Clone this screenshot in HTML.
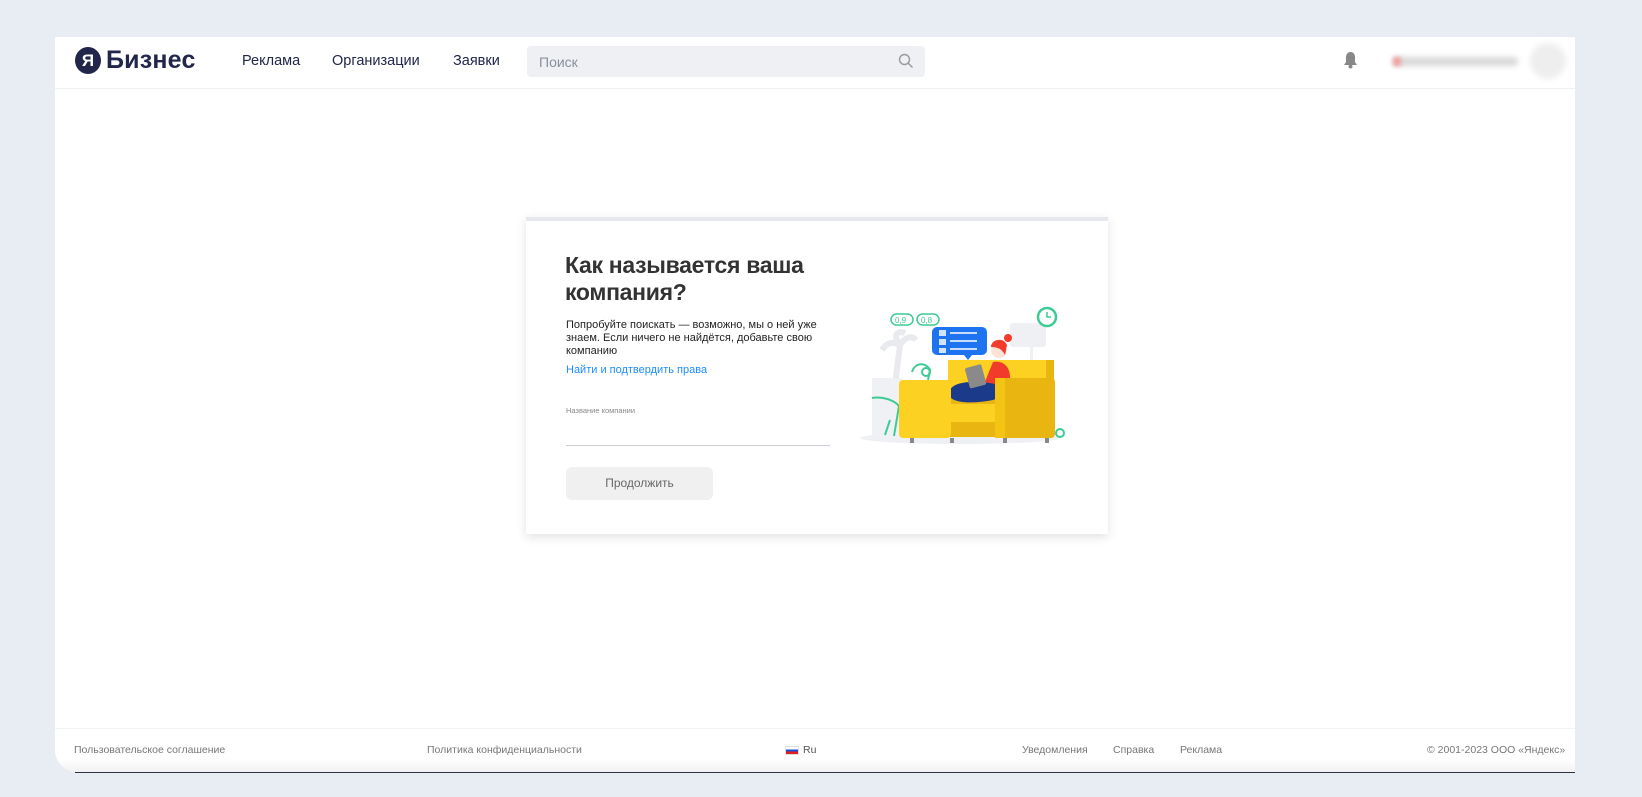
<!DOCTYPE html>
<html><head><meta charset="utf-8"><style>
*{margin:0;padding:0;box-sizing:border-box}
body{width:1642px;height:797px;background:#e8ecf3;position:relative;overflow:hidden;font-family:"Liberation Sans","Noto Sans CJK SC",sans-serif}
.a{position:absolute}
#panel{left:55px;top:37px;width:1520px;height:735px;background:#fff;border-radius:0 0 0 22px;overflow:hidden}
#strip{left:75px;top:770px;width:1500px;height:3px;background:#2a3440}
.nav{font-size:14.5px;color:#21264a;top:53px;font-weight:500}
.ft{font-size:10.5px;color:#777;top:744px}
</style></head><body>
<div id="strip" class="a"></div>
<div id="panel" class="a">
 <div class="a" style="left:0;top:51px;width:1520px;height:1px;background:#f0f1f4"></div>
 <div class="a" style="left:0;top:691px;width:1520px;height:44px;background:linear-gradient(#fff,#fff 70%,#f2f2f2);border-top:1px solid #f2f3f5"></div>
</div>
<!-- logo -->
<div class="a" style="left:75px;top:47px;width:26px;height:27px;border-radius:50%;background:#21264a;color:#fff;font-size:17px;font-weight:bold;text-align:center;line-height:27px">Я</div>
<div class="a" style="left:106px;top:45px;font-size:25px;font-weight:bold;color:#21264a;letter-spacing:0.2px;line-height:30px">Бизнес</div>
<div class="a nav" style="left:242px">Реклама</div>
<div class="a nav" style="left:332px">Организации</div>
<div class="a nav" style="left:453px">Заявки</div>
<div class="a" style="left:527px;top:46px;width:398px;height:31px;background:#eef0f4;border-radius:4px"></div>
<div class="a" style="left:539px;top:54px;font-size:14px;color:#8a8f9c">Поиск</div>
<svg class="a" style="left:898px;top:53px" width="16" height="16" viewBox="0 0 16 16"><circle cx="6.5" cy="6.5" r="5" fill="none" stroke="#999" stroke-width="1.4"/><path d="M10 10l4.5 4.5" stroke="#999" stroke-width="1.4"/></svg>
<svg class="a" style="left:1343px;top:51px" width="15" height="18" viewBox="0 0 15 18"><path d="M7.5 1c-3 0-4.5 2.5-4.5 5v5L1 14h13l-2-3V6c0-2.5-1.5-5-4.5-5z" fill="#888"/><circle cx="7.5" cy="15.5" r="2" fill="#888"/></svg>
<div class="a" style="left:1393px;top:57px;width:125px;height:9px;background:#d8d8d8;filter:blur(3px);border-radius:4px"></div>
<div class="a" style="left:1393px;top:57px;width:8px;height:9px;background:#f2a0a0;filter:blur(2px)"></div>
<div class="a" style="left:1530px;top:43px;width:36px;height:36px;border-radius:50%;background:#eee;filter:blur(3px)"></div>

<!-- card -->
<div class="a" style="left:526px;top:217px;width:582px;height:317px;background:#fff;border-top:4px solid #e6e8ee;box-shadow:0 3px 10px rgba(0,0,0,.12)"></div>
<div class="a" style="left:565px;top:252px;font-size:23px;line-height:27px;font-weight:bold;color:#333;width:270px;letter-spacing:-0.3px">Как называется ваша компания?</div>
<div class="a" style="left:566px;top:319px;font-size:11px;line-height:12.8px;color:#222;width:260px">Попробуйте поискать — возможно, мы о ней уже знаем. Если ничего не найдётся, добавьте свою компанию</div>
<div class="a" style="left:566px;top:364px;font-size:11px;color:#1e8cff">Найти и подтвердить права</div>
<div class="a" style="left:566px;top:406px;font-size:7.5px;color:#888">Название компании</div>
<div class="a" style="left:566px;top:445px;width:264px;height:1px;background:#c9ced8"></div>
<div class="a" style="left:566px;top:467px;width:147px;height:33px;background:#f0f0f0;border-radius:6px;font-size:12px;color:#666;text-align:center;line-height:33px">Продолжить</div>

<!-- illustration -->
<svg class="a" style="left:850px;top:300px" width="220" height="150" viewBox="0 0 220 150">
<ellipse cx="110" cy="138" rx="100" ry="6" fill="#eef0f3"/>
<rect x="160" y="23" width="36" height="24" rx="3" fill="#eef0f3"/><rect x="180" y="45" width="3" height="45" fill="#eef0f3"/>
<path d="M45 85 l5-40 M50 45 c-10-5-15 0-18 5 M50 45 c5-8 12-10 16-5 M50 45 c-8-10-2-15 5-12" stroke="#e8eaee" stroke-width="6" fill="none"/>
<rect x="22" y="78" width="30" height="60" fill="#f0f1f4"/>
<path d="M22 98 c10-2 22 2 27 8 l-5 30 M40 120 l-5 15 M62 72 c3-10 14-10 18 -2 l-2 10" stroke="#3ccb94" stroke-width="2" fill="none"/>
<circle cx="76" cy="72" r="4" fill="none" stroke="#3ccb94" stroke-width="2"/>
<rect x="41" y="14" width="22" height="11" rx="5.5" fill="none" stroke="#3ccb94" stroke-width="1.5"/><text x="45" y="23" font-size="8" fill="#3ccb94" font-family="Liberation Sans">0,9</text>
<rect x="67" y="14" width="22" height="11" rx="5.5" fill="none" stroke="#3ccb94" stroke-width="1.5"/><text x="71" y="23" font-size="8" fill="#3ccb94" font-family="Liberation Sans">0,8</text>
<circle cx="197" cy="17" r="9" fill="#fff" stroke="#3ccb94" stroke-width="2.5"/><path d="M197 12v5h4" stroke="#3ccb94" stroke-width="1.5" fill="none"/>
<!-- sofa back -->
<path d="M98 60h98l6 8v22h-104z" fill="#fcd121"/>
<rect x="196" y="60" width="8" height="40" fill="#e9b510"/>
<!-- woman body -->
<path d="M143 62c10-2 17 5 17 15v12h-28z" fill="#f33b2c"/>
<circle cx="149" cy="50" r="8" fill="#fde3d5"/>
<path d="M141 47c0-8 13-10 16-2l-2 10c-3-6-7-8-14-8z" fill="#f33b2c"/>
<circle cx="158" cy="38" r="4" fill="#f33b2c"/>
<!-- seat base -->
<rect x="60" y="95" width="140" height="42" fill="#e9b510"/>
<rect x="63" y="104" width="100" height="18" rx="2" fill="#fcd121"/>
<path d="M100 104v18" stroke="#e0aa10"/>
<!-- legs -->
<path d="M100 90c5-10 30-9 45-6 6 2 6 14-2 16-15 3-35 4-42-2-3-2-3-5-1-8z" fill="#1c3a8a"/>
<rect x="117" y="66" width="17" height="21" rx="2" fill="#8a8a8a" transform="rotate(-15 125 76)"/>
<!-- arms -->
<rect x="49" y="80" width="52" height="58" rx="4" fill="#fcd121"/>
<rect x="145" y="78" width="60" height="60" rx="4" fill="#e9b510"/>
<rect x="145" y="78" width="10" height="60" fill="#f4c414"/>
<path d="M87 27h45a5 5 0 0 1 5 5v18a5 5 0 0 1-5 5h-10l-4 5-4-5h-27a5 5 0 0 1-5-5v-18a5 5 0 0 1 5-5z" fill="#1e74f0"/>
<rect x="89" y="30" width="7" height="6" fill="#fff" opacity=".8"/><rect x="89" y="39" width="7" height="6" fill="#fff" opacity=".8"/><rect x="89" y="48" width="7" height="5" fill="#fff" opacity=".8"/>
<path d="M100 33h27M100 41h27M100 49h27" stroke="#fff" stroke-width="1.5"/>
<rect x="60" y="138" width="4" height="5" fill="#888"/><rect x="100" y="138" width="4" height="5" fill="#888"/><rect x="153" y="138" width="4" height="5" fill="#888"/><rect x="195" y="138" width="4" height="5" fill="#888"/>
<circle cx="210" cy="133" r="4" fill="none" stroke="#3ccb94" stroke-width="2"/>
</svg>

<!-- footer -->
<div class="a ft" style="left:74px">Пользовательское соглашение</div>
<div class="a ft" style="left:427px">Политика конфиденциальности</div>
<div class="a" style="left:785px;top:746px;width:14px;height:9px;background:linear-gradient(#fff 33%,#1c4bd0 33% 66%,#e02020 66%);border:1px solid #ddd"></div>
<div class="a ft" style="left:803px;color:#555">Ru</div>
<div class="a ft" style="left:1022px">Уведомления</div>
<div class="a ft" style="left:1113px">Справка</div>
<div class="a ft" style="left:1180px">Реклама</div>
<div class="a ft" style="left:1427px">© 2001-2023 ООО «Яндекс»</div>
</body></html>
